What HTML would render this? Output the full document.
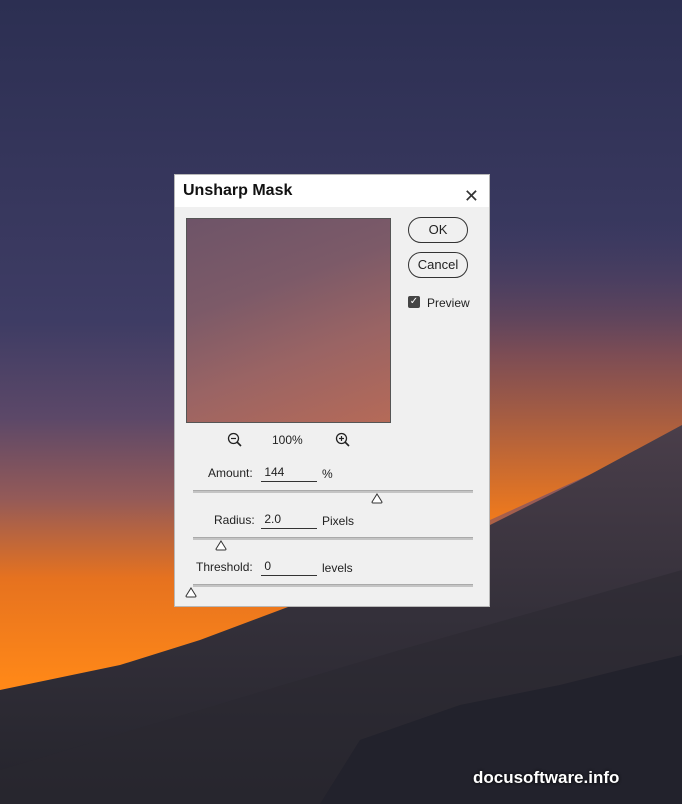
<!DOCTYPE html>
<html><head><meta charset="utf-8"><style>
body{margin:0;width:682px;height:804px;overflow:hidden;position:relative;font-family:"Liberation Sans",sans-serif}
svg.bg{position:absolute;left:0;top:0}
.dlg{position:absolute;left:174px;top:174px;width:316px;height:433px;background:#f0f0f0;border:1px solid #b8b8b8;box-sizing:border-box}
.title{height:32px;background:#fff;font-weight:bold;font-size:16px;line-height:32px;padding-left:8px;color:#111}
.x{position:absolute;right:10px;top:5px;font-size:18px;color:#333;font-weight:normal}
.prev{position:absolute;left:11px;top:43px;width:205px;height:205px;border:1px solid #555;box-sizing:border-box;background:linear-gradient(160deg,#6e5468 0%,#7c5a68 35%,#9a6464 65%,#b56a58 100%)}
.btn{position:absolute;left:233px;width:60px;height:26px;border:1px solid #333;border-radius:13px;box-sizing:border-box;font-size:13px;text-align:center;line-height:24px;color:#222}
.t{position:absolute;font-size:12px;color:#222}
.inp{position:absolute;width:56px;border-bottom:1px solid #333;font-size:12px;color:#222;height:16px}
.trk{position:absolute;left:18px;width:280px;height:2px;background:#c4c4c4;border-top:1px solid #aaa}
.thumb{position:absolute;width:12px;height:11px}
</style></head><body>
<svg class="bg" width="682" height="804">
<defs>
<linearGradient id="sky" x1="0" y1="0" x2="0" y2="1">
<stop offset="0" stop-color="#2c2f52"/><stop offset="0.4" stop-color="#3e3c64"/><stop offset="0.52" stop-color="#5c4868"/><stop offset="0.62" stop-color="#945a58"/><stop offset="0.72" stop-color="#e6721f"/><stop offset="0.85" stop-color="#ff8818"/></linearGradient>
<linearGradient id="orR" x1="0" y1="0" x2="0" y2="1"><stop offset="0" stop-color="#4a3e66" stop-opacity="0"/><stop offset="0.45" stop-color="#8a5050" stop-opacity="0.8"/><stop offset="1" stop-color="#f07a1c"/></linearGradient>
<linearGradient id="hill" x1="0" y1="0" x2="0" y2="1"><stop offset="0" stop-color="#4a3e4a"/><stop offset="0.5" stop-color="#34303a"/><stop offset="1" stop-color="#24242c"/></linearGradient>
</defs>
<rect width="682" height="804" fill="url(#sky)"/>
<polygon points="490,220 682,220 682,430 600,470 490,520" fill="url(#orR)"/>
<polygon points="0,690 120,665 200,640 280,610 400,565 490,525 580,480 682,425 682,804 0,804" fill="url(#hill)"/>
<polygon points="0,770 200,710 400,650 682,570 682,804 0,804" fill="#2a2830" opacity="0.5"/>
<polygon points="320,804 360,740 460,705 560,685 640,665 682,655 682,804" fill="#22222c"/>
</svg>
<div class="dlg">
<div class="title">Unsharp Mask<span class="x">✕</span></div>
<div class="prev"></div>
<div class="btn" style="top:42px">OK</div>
<div class="btn" style="top:77px">Cancel</div>
<div style="position:absolute;left:233px;top:121px;width:12px;height:12px;background:#444;border-radius:2px;color:#fff;font-size:10px;line-height:12px;text-align:center">✓</div>
<div class="t" style="left:252px;top:121px">Preview</div>
<svg style="position:absolute;left:52px;top:257px" width="16" height="16"><circle cx="6.5" cy="6.5" r="5" fill="none" stroke="#222" stroke-width="1.3"/><line x1="10" y1="10" x2="14" y2="14" stroke="#222" stroke-width="1.6"/><line x1="4" y1="6.5" x2="9" y2="6.5" stroke="#222" stroke-width="1.2"/></svg>
<div class="t" style="left:97px;top:258px">100%</div>
<svg style="position:absolute;left:160px;top:257px" width="16" height="16"><circle cx="6.5" cy="6.5" r="5" fill="none" stroke="#222" stroke-width="1.3"/><line x1="10" y1="10" x2="14" y2="14" stroke="#222" stroke-width="1.6"/><line x1="4" y1="6.5" x2="9" y2="6.5" stroke="#222" stroke-width="1.2"/><line x1="6.5" y1="4" x2="6.5" y2="9" stroke="#222" stroke-width="1.2"/></svg>
<div class="t" style="left:33px;top:291px">Amount:</div>
<div class="inp" style="left:86px;top:290px">&nbsp;144</div>
<div class="t" style="left:147px;top:292px">%</div>
<div class="trk" style="top:315px"></div>
<svg class="thumb" style="left:196px;top:318px" viewBox="0 0 12 11"><path d="M6 1 L11 9 Q11 10 10 10 L2 10 Q1 10 1 9 Z" fill="#fff" stroke="#333"/></svg>
<div class="t" style="left:39px;top:338px">Radius:</div>
<div class="inp" style="left:86px;top:337px">&nbsp;2.0</div>
<div class="t" style="left:147px;top:339px">Pixels</div>
<div class="trk" style="top:362px"></div>
<svg class="thumb" style="left:40px;top:365px" viewBox="0 0 12 11"><path d="M6 1 L11 9 Q11 10 10 10 L2 10 Q1 10 1 9 Z" fill="#fff" stroke="#333"/></svg>
<div class="t" style="left:21px;top:385px">Threshold:</div>
<div class="inp" style="left:86px;top:384px">&nbsp;0</div>
<div class="t" style="left:147px;top:386px">levels</div>
<div class="trk" style="top:409px"></div>
<svg class="thumb" style="left:10px;top:412px" viewBox="0 0 12 11"><path d="M6 1 L11 9 Q11 10 10 10 L2 10 Q1 10 1 9 Z" fill="#fff" stroke="#333"/></svg>
</div>
<div style="position:absolute;left:473px;top:768px;color:#fff;font-weight:bold;font-size:17px;text-shadow:0 0 3px #000">docusoftware.info</div>
</body></html>
